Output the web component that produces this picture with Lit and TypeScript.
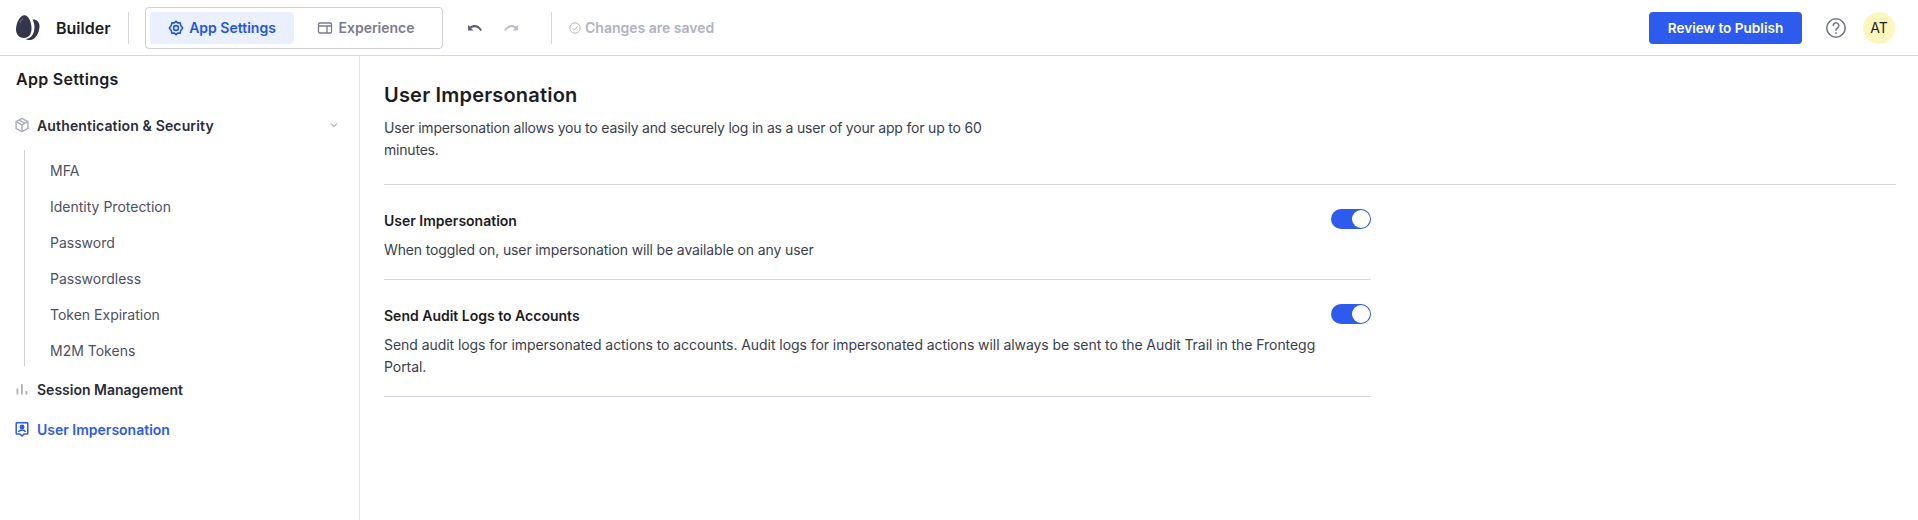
import { LitElement, html, css } from "lit";
import { customElement } from "lit/decorators.js";

const children = ["MFA", "Identity Protection", "Password", "Passwordless", "Token Expiration", "M2M Tokens"];

@customElement("app-toggle")
class AppToggle extends LitElement {
  static styles = css`
    :host { display: block; flex: none; }
    .track { display: flex; justify-content: flex-end; align-items: center; box-sizing: border-box; width: 40px; height: 20px; border-radius: 10px; background: #2d5bee; padding: 1px; }
    .knob { width: 18px; height: 18px; border-radius: 50%; background: #fff; }
  `;
  render() { return html`<div class="track"><div class="knob"></div></div>`; }
}

@customElement("app-root")
export class AppRoot extends LitElement {
  static styles = css`
    :host { display: block; height: 520px; background: #fff; font-family: Inter, "Noto Sans", sans-serif; color: #1f2130; overflow: hidden; }
    * { box-sizing: border-box; }
    svg { display: block; flex: none; }
    header { display: flex; align-items: center; height: 56px; border-bottom: 1px solid #d8d8dc; padding: 0 23px 0 15px; }
    .brand { font-size: 16px; font-weight: 600; color: #1b1c24; margin-left: 16px; width: 72px; }
    .vr { width: 1px; height: 32px; background: #d5d6dc; flex: none; }
    .tabs { display: flex; margin-left: 16px; width: 298px; height: 42px; padding: 4px; border: 1px solid #cfd1da; border-radius: 4px; }
    .tab { display: flex; align-items: center; justify-content: center; gap: 5px; width: 144px; border-radius: 4px; font-size: 14px; font-weight: 600; color: #7a7c90; }
    .tab.on { background: #eaf0fd; color: #1f55ea; }
    .history { display: flex; gap: 20px; margin-left: 24px; width: 84px; }
    .saved { display: flex; align-items: center; gap: 4px; margin-left: 17px; font-size: 14px; font-weight: 600; color: #b0b2c2; }
    .right { margin-left: auto; display: flex; align-items: center; }
    .publish { display: flex; align-items: center; justify-content: center; width: 153px; height: 32px; border-radius: 4px; background: #2d5bee; color: #fff; font-size: 13.6px; font-weight: 600; }
    .help { margin-left: 23px; }
    .avatar { display: flex; align-items: center; justify-content: center; margin-left: 16px; width: 32px; height: 32px; border-radius: 50%; background: #fff6bd; font-size: 14px; color: #1b1c24; }
    .body { display: flex; height: 464px; }
    aside { width: 360px; flex: none; border-right: 1px solid #e6e6ea; padding: 12px 0 0 0; }
    .aside-title { font-size: 16px; font-weight: 600; line-height: 22px; letter-spacing: 0.3px; color: #1b1c24; padding-left: 16px; }
    .row { display: flex; align-items: center; height: 24px; font-size: 14px; font-weight: 600; color: #2a2c3c; padding-left: 14px; gap: 7px; }
    .row.first { margin-top: 23px; letter-spacing: 0.15px; }
    .row.blue { color: #2d5bee; margin-top: 16px; }
    .row.sess { margin-top: 11px; }
    .chev { margin-left: auto; margin-right: 19px; }
    .tree { margin: 13px 0 0 24px; height: 216px; border-left: 1px solid #cfd1da; padding: 2px 0 0 25px; }
    .tree div { height: 36px; display: flex; align-items: center; font-size: 14px; color: #4e5065; }
    main { flex: 1; padding: 26px 22px 0 24px; }
    h1 { margin: 0; font-size: 20px; font-weight: 600; line-height: 26px; letter-spacing: 0.2px; color: #1b1c24; }
    .lead { margin: 9px 0 0; width: 640px; font-size: 14px; line-height: 22px; letter-spacing: -0.2px; color: #3c3e50; }
    .divider { height: 1px; background: #d5d6dc; margin-top: 23px; }
    .setting { width: 987px; border-bottom: 1px solid #d5d6dc; }
    .s1 { padding-top: 24px; height: 95px; }
    .s2 { padding-top: 24px; height: 117px; }
    .top { display: flex; justify-content: space-between; align-items: flex-start; height: 20px; }
    .top b { font-size: 14px; font-weight: 600; line-height: 24px; color: #1b1c24; }
    .setting p { margin: 10px 0 0; font-size: 14px; line-height: 22px; color: #3c3e50; width: 940px; }
    .s1 p { letter-spacing: -0.13px; }
    .s2 p { letter-spacing: -0.06px; }
  `;

  render() {
    return html`
      <header>
        <svg width="25" height="26" viewBox="15 15 25 26">
          <path fill="#33354a" d="M24.500 15.300C28.500 15.300 31.500 22 31.500 28.500C31.500 34.500 28.500 38 24 38C19.500 38 16 34.800 16 29.500C16 23 20 15.300 24.500 15.300z"/>
          <path fill="none" stroke="#8a8ca0" stroke-width=".8" d="M20 23c.5-1.800 1.500-3.400 3-4.500"/>
          <path fill="#33354a" d="M32.500 19.500C36 19 39.500 21.500 39.500 26C39.500 33 35 40 30 40C28 40 26 39.500 25.500 39C30 39 34.500 35 34.500 27C34.500 24 33.500 21.500 32.500 19.500z"/>
        </svg>
        <span class="brand">Builder</span>
        <span class="vr"></span>
        <div class="tabs">
          <div class="tab on">
            <svg width="16" height="16" viewBox="0 0 16 16" fill="none" stroke="#1f55ea" stroke-width="1.600"><path d="M8 1.200l1.700 1.700 2.400-.2.500 2.400L14.600 8l-2 2.900-.500 2.400-2.400-.2L8 14.800l-1.700-1.700-2.400.2-.5-2.400L1.400 8l2-2.900.5-2.400 2.400.2z" stroke-linejoin="round"/><circle cx="8" cy="8" r="2.400"/></svg>
            App Settings
          </div>
          <div class="tab">
            <svg width="16" height="16" viewBox="0 0 16 16" fill="none" stroke="#7a7c90" stroke-width="1.300"><rect x="1.500" y="3" width="13" height="10" rx="1.200"/><path d="M1.500 6h13M10 6v7"/></svg>
            Experience
          </div>
        </div>
        <div class="history">
          <svg width="16" height="16" viewBox="0 0 16 16"><path d="M1 5v5.500h5.500L4.200 8.400C7 6.400 11 7 13.500 11L15 10.200C12.500 5 7 3.400 3 6.800z" fill="#5f6174"/></svg>
          <svg width="16" height="16" viewBox="0 0 16 16"><path d="M15 5v5.500H9.500l2.300-2.100C9 6.400 5 7 2.500 11L1 10.200C3.500 5 9 3.400 13 6.800z" fill="#bcbeca"/></svg>
        </div>
        <span class="vr"></span>
        <div class="saved">
          <svg width="12" height="12" viewBox="0 0 14 14" fill="none" stroke="#b0b2c2" stroke-width="1.100"><circle cx="7" cy="7" r="6"/><path d="M4.300 7.200l2 2 3.500-4"/></svg>
          Changes are saved
        </div>
        <div class="right">
          <div class="publish">Review to Publish</div>
          <svg class="help" width="22" height="22" viewBox="0 0 22 22" fill="none" stroke="#767889" stroke-width="1.600"><circle cx="11" cy="11" r="9.200"/><path d="M8.200 8.600a2.800 2.800 0 1 1 4.400 2.300c-1 .7-1.600 1.200-1.600 2.400" stroke-linecap="round"/><circle cx="11" cy="16" r=".6" fill="#767889" stroke-width=".8"/></svg>
          <div class="avatar">AT</div>
        </div>
      </header>
      <div class="body">
        <aside>
          <div class="aside-title">App Settings</div>
          <div class="row first">
            <svg width="16" height="16" viewBox="0 0 16 16" fill="none" stroke="#aeb0bd" stroke-width="1.500"><path d="M8 1.300l5.900 3.300v6.800L8 14.700l-5.900-3.300V4.600z" stroke-linejoin="round"/><path d="M2.300 4.600L8 8l5.700-3.400M8 8v6.500M5 3l6 3.400"/></svg>
            Authentication &amp; Security
            <svg class="chev" width="12" height="12" viewBox="0 0 12 12" fill="none" stroke="#7a7c90" stroke-width="1"><path d="M3 4.500l3 3 3-3"/></svg>
          </div>
          <div class="tree">${children.map((c) => html`<div>${c}</div>`)}</div>
          <div class="row sess">
            <svg width="16" height="16" viewBox="0 0 16 16" fill="#aeb0bd"><rect x="2.500" y="7.500" width="1.800" height="6"/><rect x="7" y="3" width="1.800" height="10.500"/><rect x="11.500" y="10" width="1.800" height="3.500"/></svg>
            Session Management
          </div>
          <div class="row blue">
            <svg width="16" height="16" viewBox="0 0 16 16" fill="none" stroke="#2d5bee" stroke-width="1.500"><path d="M2.800 1.800h10.400a.6.600 0 0 1 .6.600v10a.6.600 0 0 1-.6.600h-3.200L8 15l-2-2H2.800a.6.600 0 0 1-.6-.6v-10a.6.600 0 0 1 .6-.6z"/><circle cx="8" cy="6" r="1.700" fill="#2d5bee"/><path d="M4.500 11c.6-1.400 1.900-2 3.500-2s2.900.6 3.500 2"/></svg>
            User Impersonation
          </div>
        </aside>
        <main>
          <h1>User Impersonation</h1>
          <p class="lead">User impersonation allows you to easily and securely log in as a user of your app for up to 60 minutes.</p>
          <div class="divider"></div>
          <div class="setting s1">
            <div class="top"><b>User Impersonation</b><app-toggle></app-toggle></div>
            <p>When toggled on, user impersonation will be available on any user</p>
          </div>
          <div class="setting s2">
            <div class="top"><b>Send Audit Logs to Accounts</b><app-toggle></app-toggle></div>
            <p>Send audit logs for impersonated actions to accounts. Audit logs for impersonated actions will always be sent to the Audit Trail in the Frontegg Portal.</p>
          </div>
        </main>
      </div>
    `;
  }
}
